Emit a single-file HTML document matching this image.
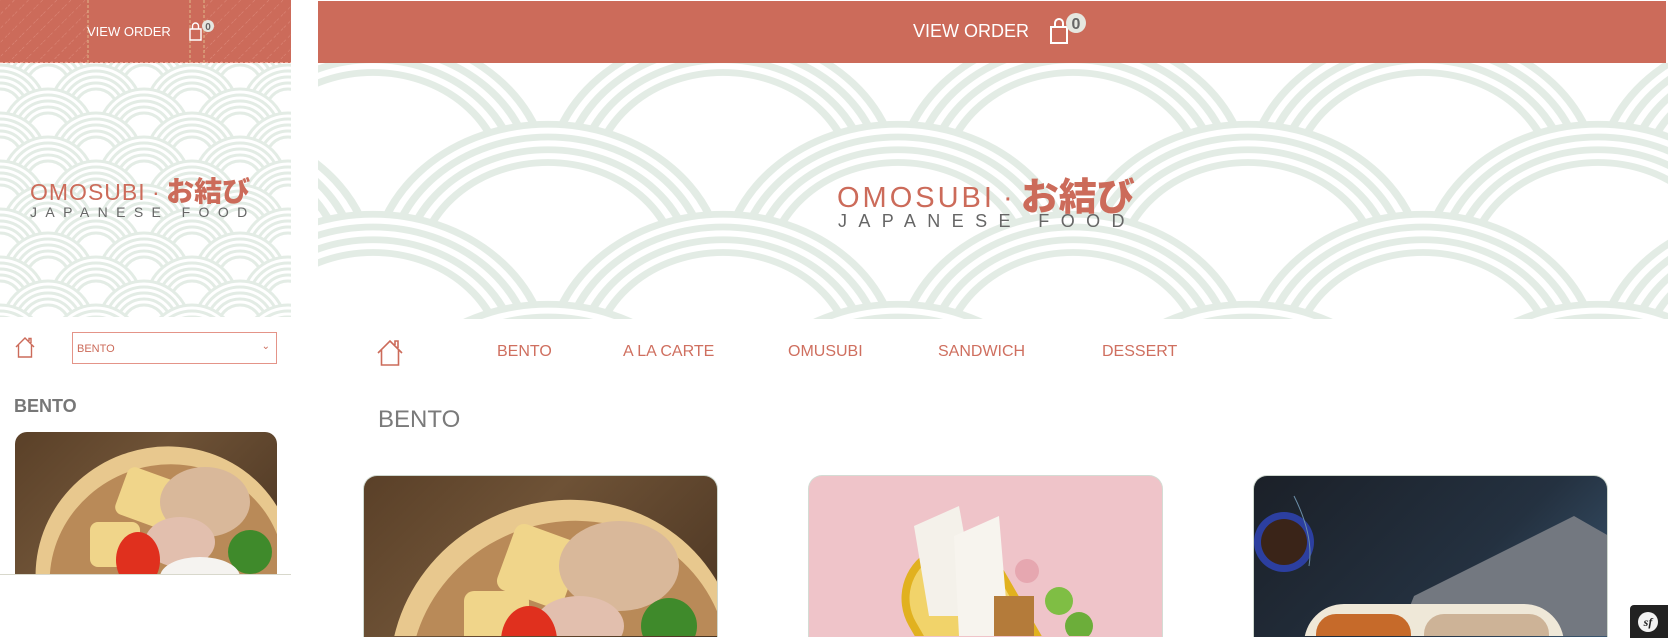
<!DOCTYPE html>
<html style="overflow:hidden;height:638px"><head><meta charset="utf-8">
<style>
*{margin:0;padding:0;box-sizing:border-box}
body{width:1668px;height:638px;overflow:hidden;background:#fff;font-family:"Liberation Sans","Noto Sans CJK JP",sans-serif;position:relative}
.abs{position:absolute}
.red{background:#cc6b5a}
.vo{color:#fff;white-space:nowrap}
.nav{color:#cf6f5f;font-size:16px;top:343px}
.jp{font-family:"Noto Sans CJK JP","WenQuanYi Zen Hei",sans-serif;font-weight:900;color:#cc6b5a}
svg{display:block}
</style></head><body>

<!-- Main hero pattern -->
<svg class="abs" style="left:318px;top:63px" width="1350" height="256">
<defs>
<g id="M"><circle r="175"/><circle r="160" fill="none"/><circle r="145" fill="none"/><circle r="130" fill="none"/></g>
<pattern id="pm" width="350" height="180" patternUnits="userSpaceOnUse" x="55" y="-60">
<g fill="#fff" stroke="#e3ece5" stroke-width="8">
<use href="#M" transform="translate(175,-90) scale(1,0.85)"/>
<use href="#M" transform="translate(0,0) scale(1,0.85)"/>
<use href="#M" transform="translate(350,0) scale(1,0.85)"/>
<use href="#M" transform="translate(175,90) scale(1,0.85)"/>
<use href="#M" transform="translate(0,180) scale(1,0.85)"/>
<use href="#M" transform="translate(350,180) scale(1,0.85)"/>
<use href="#M" transform="translate(175,270) scale(1,0.85)"/>
</g>
</pattern>
<g id="L"><circle r="46"/><circle r="40" fill="none"/><circle r="34" fill="none"/><circle r="28" fill="none"/><circle r="22" fill="none"/></g>
<pattern id="pl" width="96" height="48" patternUnits="userSpaceOnUse">
<g fill="#fff" stroke="#e3ece5" stroke-width="3">
<use href="#L" transform="translate(48,-24)"/>
<use href="#L" transform="translate(0,0)"/>
<use href="#L" transform="translate(96,0)"/>
<use href="#L" transform="translate(48,24)"/>
<use href="#L" transform="translate(0,48)"/>
<use href="#L" transform="translate(96,48)"/>
<use href="#L" transform="translate(48,72)"/>
</g>
</pattern>
<pattern id="hatch" width="10" height="10" patternUnits="userSpaceOnUse" patternTransform="rotate(45)">
<line x1="0" y1="0" x2="0" y2="10" stroke="#e9a193" stroke-width="1" stroke-dasharray="3 3"/>
</pattern>
</defs>
<rect width="1350" height="256" fill="url(#pm)"/>
</svg>

<!-- Left hero pattern -->
<svg class="abs" style="left:0;top:63px" width="291" height="254">
<rect width="291" height="254" fill="url(#pl)"/>
</svg>

<!-- Left top bar -->
<div class="abs red" style="left:0;top:0;width:291px;height:63px"></div>
<svg class="abs" style="left:0;top:0" width="291" height="63"><rect width="291" height="63" fill="url(#hatch)" opacity=".6"/><rect x="88" width="116" height="63" fill="#cc6b5a"/><line x1="88" y1="0" x2="88" y2="63" stroke="#eea" stroke-width="1" stroke-dasharray="3 2" opacity=".6"/><line x1="190" y1="0" x2="190" y2="63" stroke="#eea" stroke-dasharray="3 2" opacity=".6"/><line x1="204" y1="0" x2="204" y2="63" stroke="#eea" stroke-dasharray="3 2" opacity=".6"/><line x1="0" y1="62.5" x2="291" y2="62.5" stroke="#f0a090" stroke-dasharray="3 2"/></svg>
<div class="abs vo" style="left:87px;top:24px;font-size:13px">VIEW ORDER</div>
<svg class="abs" style="left:188px;top:20px" width="30" height="24"><path d="M2 9h11v11H2z M4.5 9V6a3 3 0 0 1 6 0v3" fill="none" stroke="#fff" stroke-width="1.4"/><circle cx="20" cy="6" r="6" fill="#e5e6e0"/><text x="20" y="10" font-size="10" font-weight="bold" text-anchor="middle" fill="#666" font-family="Liberation Sans">0</text></svg>

<!-- Left logo -->
<div class="abs" style="left:30px;top:170px;font-size:23px;color:#cc6b5a;letter-spacing:1px;white-space:nowrap">OMOSUBI<span style="letter-spacing:0"> · </span><span class="jp" style="font-size:28px;letter-spacing:0;vertical-align:-1px">お結び</span></div>
<div class="abs" style="left:30px;top:204px;font-size:14px;color:#666;letter-spacing:8.4px;white-space:nowrap">JAPANESE FOOD</div>

<!-- Left nav -->
<svg class="abs" style="left:14px;top:336px" width="24" height="24"><path d="M2 11L11 2l9 9 M4.5 9v12h13V9 M15 5V2.5h2V7" fill="none" stroke="#cc6b5a" stroke-width="1.4"/></svg>
<div class="abs" style="left:72px;top:332px;width:205px;height:32px;border:1.5px solid #e49488;color:#cc6b5a;font-size:11px;padding:10px 4px">BENTO<span style="position:absolute;right:6px;top:8px;font-size:10px">&#8964;</span></div>
<div class="abs" style="left:14px;top:396px;font-size:18px;font-weight:bold;color:#777">BENTO</div>

<!-- Left card -->
<div class="abs" style="left:15px;top:432px;width:262px;height:142px;border-radius:12px 12px 0 0;overflow:hidden;background:linear-gradient(135deg,#5a4028,#6e5236 40%,#4b3522)">
<svg width="262" height="142"><ellipse cx="150" cy="140" rx="130" ry="125" transform="rotate(-20 150 140)" fill="#e8c88e"/><ellipse cx="152" cy="145" rx="118" ry="112" transform="rotate(-20 152 145)" fill="#b98a58"/><rect x="105" y="40" width="55" height="50" rx="8" fill="#f0d58a" transform="rotate(20 130 65)"/><rect x="75" y="90" width="50" height="45" rx="8" fill="#f0d58a"/><ellipse cx="190" cy="70" rx="45" ry="35" fill="#d9b89a"/><ellipse cx="165" cy="110" rx="35" ry="25" fill="#e2bfae"/><ellipse cx="123" cy="128" rx="22" ry="28" fill="#e0301e"/><circle cx="235" cy="120" r="22" fill="#3f8a2b"/><ellipse cx="185" cy="145" rx="40" ry="20" fill="#f5f3f0"/></svg>
</div>
<div class="abs" style="left:0;top:574px;width:291px;height:1px;background:#d8d8cc"></div>

<!-- Main top bar -->
<div class="abs red" style="left:318px;top:1px;width:1348px;height:62px"></div>
<div class="abs vo" style="left:913px;top:21px;font-size:18px">VIEW ORDER</div>
<svg class="abs" style="left:1048px;top:10px" width="42" height="36"><path d="M3 17h16v16H3z M7 17v-4a4 4 0 0 1 8 0v4" fill="none" stroke="#fff" stroke-width="2"/><circle cx="28" cy="13" r="10" fill="#e6e7e0"/><text x="28" y="19" font-size="16" font-weight="bold" text-anchor="middle" fill="#666" font-family="Liberation Sans">0</text></svg>

<!-- Main logo -->
<div class="abs" style="left:837px;top:166px;font-size:29px;color:#cc6b5a;letter-spacing:3px;white-space:nowrap">OMOSUBI<span style="letter-spacing:0"> · </span><span class="jp" style="font-size:38px;letter-spacing:0;vertical-align:-3px">お結び</span></div>
<div class="abs" style="left:838px;top:211px;font-size:18px;color:#666;letter-spacing:11.4px;white-space:nowrap">JAPANESE FOOD</div>

<!-- Main nav -->
<svg class="abs" style="left:376px;top:338px" width="30" height="30"><path d="M2 15L14 3l12 12 M5.5 12v15h17V12 M19 7V3h3v7" fill="none" stroke="#cc6b5a" stroke-width="1.6"/></svg>
<div class="abs nav" style="left:497px">BENTO</div>
<div class="abs nav" style="left:623px">A LA CARTE</div>
<div class="abs nav" style="left:788px">OMUSUBI</div>
<div class="abs nav" style="left:938px">SANDWICH</div>
<div class="abs nav" style="left:1102px">DESSERT</div>
<div class="abs" style="left:378px;top:406px;font-size:24px;color:#7a7a7a">BENTO</div>

<!-- Cards -->
<div class="abs" style="left:363px;top:475px;width:355px;height:162px;border-radius:14px 14px 0 0;overflow:hidden;border:1px solid #cfd8cf;border-bottom:0;background:linear-gradient(135deg,#5a4028,#6e5236 40%,#4b3522)">
<svg width="353" height="160"><ellipse cx="200" cy="190" rx="175" ry="165" transform="rotate(-20 200 190)" fill="#e8c88e"/><ellipse cx="205" cy="196" rx="160" ry="150" transform="rotate(-20 205 196)" fill="#b98a58"/><rect x="140" y="55" width="70" height="70" rx="10" fill="#f0d58a" transform="rotate(20 175 90)"/><rect x="100" y="115" width="65" height="60" rx="10" fill="#f0d58a"/><ellipse cx="255" cy="90" rx="60" ry="45" fill="#d9b89a"/><ellipse cx="215" cy="150" rx="45" ry="30" fill="#e2bfae"/><ellipse cx="165" cy="165" rx="28" ry="35" fill="#e0301e"/><circle cx="305" cy="150" r="28" fill="#3f8a2b"/></svg>
</div>
<div class="abs" style="left:808px;top:475px;width:355px;height:162px;border-radius:14px 14px 0 0;overflow:hidden;border:1px solid #d4dcd4;border-bottom:0;background:#efc4c9">
<svg width="353" height="160"><rect x="120" y="60" width="110" height="220" rx="55" transform="rotate(-30 175 170)" fill="#e1b11f"/><rect x="128" y="68" width="94" height="204" rx="47" transform="rotate(-30 175 170)" fill="#f1d36a"/><path d="M105 50 L150 30 L170 140 L120 140 Z" fill="#f4f1ea"/><path d="M145 60 L190 40 L200 160 L150 160 Z" fill="#f7f4ee"/><circle cx="218" cy="95" r="12" fill="#e6a7b0"/><circle cx="250" cy="125" r="14" fill="#7fbe44"/><circle cx="270" cy="150" r="14" fill="#6cae3a"/><rect x="185" y="120" width="40" height="40" fill="#b47b3a"/></svg>
</div>
<div class="abs" style="left:1253px;top:475px;width:355px;height:162px;border-radius:14px 14px 0 0;overflow:hidden;border:1px solid #cfd8cf;border-bottom:0;background:linear-gradient(135deg,#1b2028,#243140 60%,#3a5670)">
<svg width="353" height="160"><path d="M160 120 L320 40 L355 60 L355 170 L140 170 Z" fill="#737880"/><circle cx="30" cy="66" r="30" fill="#2c3fa0"/><circle cx="30" cy="66" r="23" fill="#3a2418"/><rect x="50" y="128" width="260" height="90" rx="40" fill="#efe8d8"/><rect x="62" y="138" width="95" height="60" rx="20" fill="#c66a2a"/><rect x="170" y="138" width="125" height="60" rx="20" fill="#cdb397"/><path d="M40 20 Q60 60 55 90" stroke="#6b8ea8" fill="none"/></svg>
</div>

<!-- sf badge -->
<div class="abs" style="left:1630px;top:605px;width:38px;height:33px;background:#222;border-radius:4px 0 0 0"></div>
<div class="abs" style="left:1638px;top:612px;width:20px;height:20px;border-radius:50%;background:#f4f4f4;color:#222;font:italic bold 12px 'Liberation Serif',serif;text-align:center;line-height:20px">sf</div>
</body></html>
